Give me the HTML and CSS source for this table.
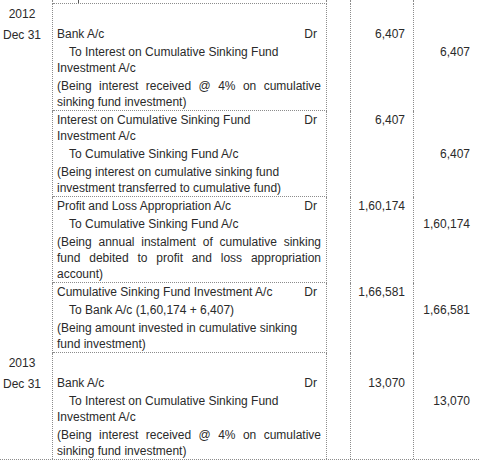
FILE: index.html
```html
<!DOCTYPE html>
<html lang="en">
<head>
<meta charset="utf-8">
<title>Journal entries</title>
<link rel="stylesheet" href="styles.css">
</head>
<body>
<div class="ledger">
  <div class="entry tail">
    <div class="cell date"></div>
    <div class="cell part"><span class="tick"></span></div>
    <div class="cell lf"></div>
    <div class="cell debit"></div>
    <div class="cell credit"></div>
  </div>

  <div class="entry">
    <div class="cell date"><p class="year">2012</p><p>Dec 31</p></div>
    <div class="cell part">
      <p class="spacer"></p>
      <p class="acct"><span>Bank A/c</span><span class="drm">Dr</span></p>
      <p class="to">To Interest on Cumulative Sinking Fund Investment A/c</p>
      <p class="nar"><span class="j">(Being interest received @ 4% on cumulative</span><span>sinking fund investment)</span></p>
    </div>
    <div class="cell lf"></div>
    <div class="cell debit"><p class="amt skip1y">6,407</p></div>
    <div class="cell credit"><p class="amt skip2y">6,407</p></div>
  </div>

  <div class="entry">
    <div class="cell date"></div>
    <div class="cell part">
      <p class="acct"><span>Interest on Cumulative Sinking Fund Investment A/c</span><span class="drm">Dr</span></p>
      <p class="to">To Cumulative Sinking Fund A/c</p>
      <p class="nar"><span>(Being interest on cumulative sinking fund</span><span>investment transferred to cumulative fund)</span></p>
    </div>
    <div class="cell lf"></div>
    <div class="cell debit"><p class="amt">6,407</p></div>
    <div class="cell credit"><p class="amt skip2">6,407</p></div>
  </div>

  <div class="entry">
    <div class="cell date"></div>
    <div class="cell part">
      <p class="acct"><span>Profit and Loss Appropriation A/c</span><span class="drm">Dr</span></p>
      <p class="to">To Cumulative Sinking Fund A/c</p>
      <p class="nar"><span class="j">(Being annual instalment of cumulative sinking</span><span class="j">fund debited to profit and loss appropriation</span><span>account)</span></p>
    </div>
    <div class="cell lf"></div>
    <div class="cell debit"><p class="amt">1,60,174</p></div>
    <div class="cell credit"><p class="amt skip1">1,60,174</p></div>
  </div>

  <div class="entry">
    <div class="cell date"></div>
    <div class="cell part">
      <p class="acct"><span>Cumulative Sinking Fund Investment A/c</span><span class="drm">Dr</span></p>
      <p class="to">To Bank A/c (1,60,174 + 6,407)</p>
      <p class="nar"><span>(Being amount invested in cumulative sinking</span><span>fund investment)</span></p>
    </div>
    <div class="cell lf"></div>
    <div class="cell debit"><p class="amt">1,66,581</p></div>
    <div class="cell credit"><p class="amt skip1">1,66,581</p></div>
  </div>

  <div class="entry">
    <div class="cell date"><p class="year">2013</p><p>Dec 31</p></div>
    <div class="cell part">
      <p class="spacer"></p>
      <p class="acct"><span>Bank A/c</span><span class="drm">Dr</span></p>
      <p class="to">To Interest on Cumulative Sinking Fund Investment A/c</p>
      <p class="nar"><span class="j">(Being interest received @ 4% on cumulative</span><span>sinking fund investment)</span></p>
    </div>
    <div class="cell lf"></div>
    <div class="cell debit"><p class="amt skip1y">13,070</p></div>
    <div class="cell credit"><p class="amt skip2y">13,070</p></div>
  </div>
</div>
</body>
</html>
```

FILE: styles.css
```css
* {
  box-sizing: border-box;
  margin: 0;
  padding: 0;
}

html, body {
  background: #ffffff;
}

body {
  width: 479px;
  height: 465px;
  overflow: hidden;
  font-family: "Liberation Sans", Arial, sans-serif;
  font-size: 12px;
  line-height: 16px;
  color: #2a2a2a;
}

.ledger {
  display: flex;
  flex-direction: column;
  border-bottom: 1px dotted #8c8c8c;
}

.entry {
  display: grid;
  grid-template-columns: 53px 274px 24px 63px 1fr;
}

.cell {
  border-right: 1px dotted #8c8c8c;
  padding-top: 1px;
  display: flex;
  flex-direction: column;
  gap: 2px;
}

.cell.credit {
  border-right: 0;
}

.date {
  align-items: center;
  padding-right: 8px;
  padding-top: 2px;
}

.part {
  padding: 1px 5px 0 4px;
  border-bottom: 1px dotted #8c8c8c;
}

.entry:last-child .part {
  border-bottom: 0;
}

.tail {
  height: 4px;
}

.tail .cell {
  padding: 0;
}

.tail .part {
  position: relative;
}

.tick {
  position: absolute;
  left: 25px;
  top: 0;
  width: 1px;
  height: 3px;
  background: #555555;
}

.spacer,
.year {
  margin-bottom: 3px;
}

.spacer {
  height: 16px;
}

.acct {
  display: flex;
  justify-content: space-between;
  align-items: flex-start;
  gap: 18px;
}

.drm {
  padding-right: 4px;
  flex: none;
}

.to {
  text-indent: 12px;
}

.nar span {
  display: block;
}

.nar .j {
  text-align: justify;
  text-align-last: justify;
}

.amt {
  text-align: right;
}

.debit .amt {
  padding-right: 8px;
}

.credit .amt {
  padding-right: 9px;
}

.skip1 {
  margin-top: 18px;
}

.skip2 {
  margin-top: 34px;
}

.skip1y {
  margin-top: 21px;
}

.skip2y {
  margin-top: 39px;
}
```
